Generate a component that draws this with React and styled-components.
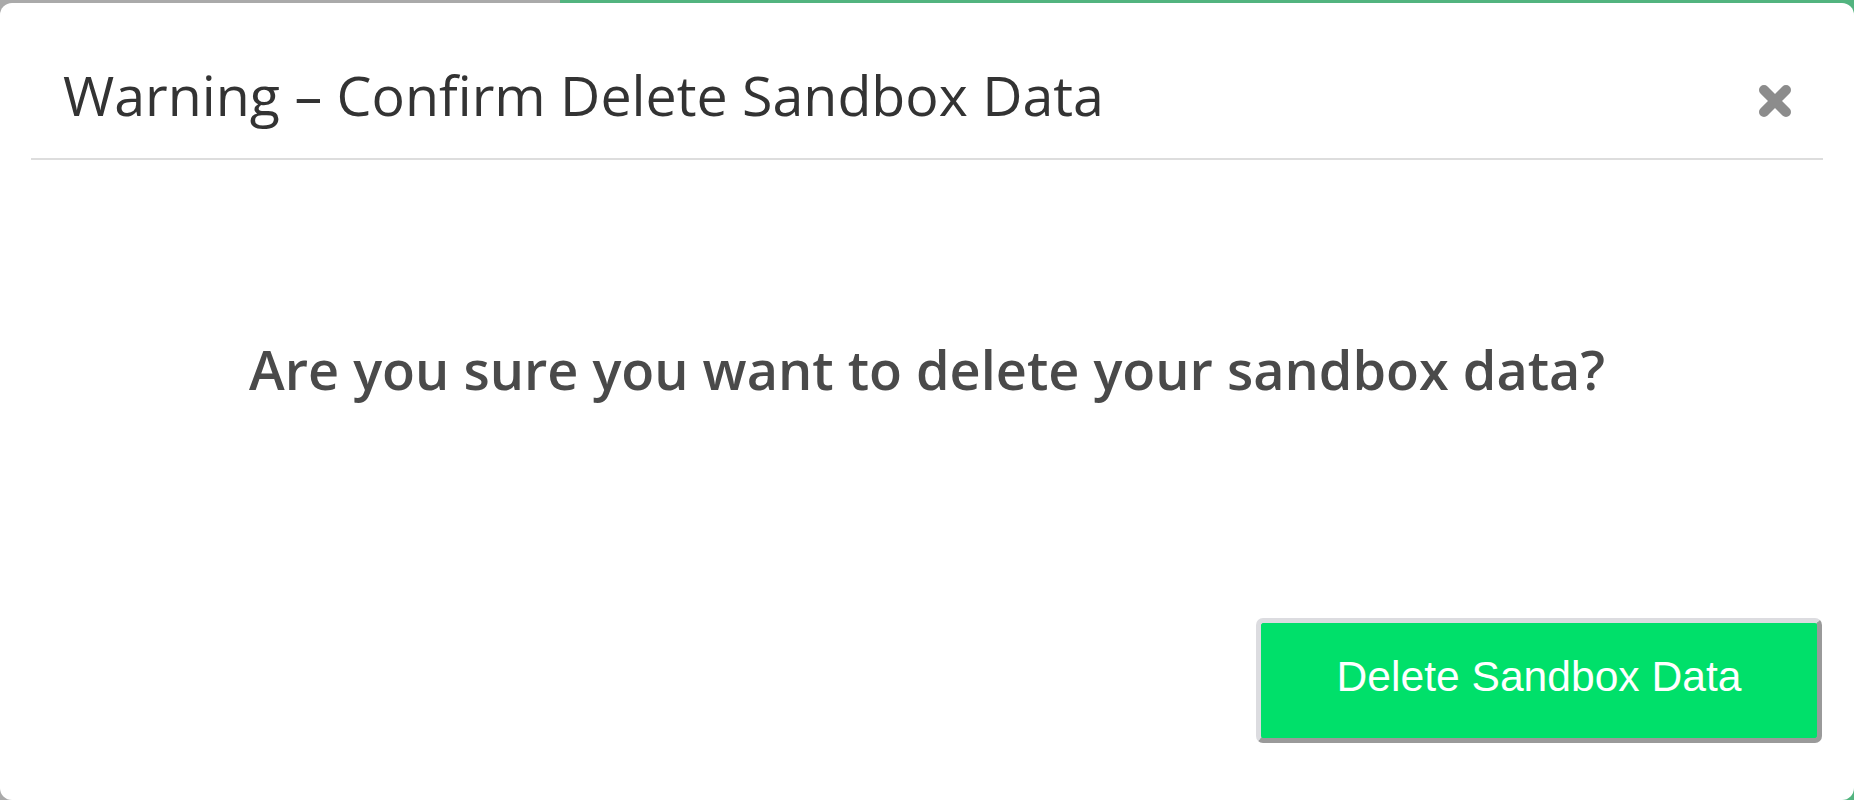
import React from "react";
import styled, { createGlobalStyle } from "styled-components";

const Global = createGlobalStyle`
  html, body {
    margin: 0;
    padding: 0;
    height: 100%;
    overflow: hidden;
  }
  body {
    background: linear-gradient(to right, #aaaaaa 0, #aaaaaa 560px, #52b47f 560px, #52b47f 100%);
    font-family: "Open Sans", "Noto Sans", sans-serif;
  }
`;

const Modal = styled.div`
  margin-top: 3px;
  height: 797px;
  background: #ffffff;
  border-radius: 12px;
  display: flex;
  flex-direction: column;
  box-sizing: border-box;
`;

const Header = styled.div`
  margin: 0 31px 0 31px;
  padding: 59px 32px 29px 32px;
  border-bottom: 2px solid #dddddd;
  display: flex;
  align-items: center;
  justify-content: space-between;
`;

const Title = styled.h4`
  margin: 0;
  font-family: "Open Sans", sans-serif;
  font-weight: 400;
  font-size: 55.5px;
  line-height: 1.2;
  color: #333333;
`;

const CloseButton = styled.button`
  border: 0;
  background: transparent;
  padding: 0;
  margin: 12px -3px 0 0;
  width: 38px;
  height: 36px;
  display: flex;
  align-items: center;
  justify-content: center;
  cursor: pointer;
`;

const Body = styled.div`
  flex: 1;
  display: flex;
  align-items: center;
  justify-content: center;
  padding-bottom: 40px;
`;

const Message = styled.p`
  margin: 0;
  font-family: "Open Sans", sans-serif;
  font-weight: 600;
  font-size: 54px;
  color: #4a4a4a;
  text-align: center;
`;

const Footer = styled.div`
  display: flex;
  justify-content: flex-end;
  margin: 0 32px 57px 32px;
`;

const DangerButton = styled.button`
  width: 566px;
  height: 125px;
  box-sizing: border-box;
  padding: 0 0 9px 0;
  background: #00e06a;
  border: 5px solid;
  border-color: #dcdce0 #9a9a9a #9a9a9a #dcdce0;
  border-radius: 7px;
  color: #ffffff;
  font-family: "Liberation Sans", Arial, sans-serif;
  font-size: 42.6px;
  font-weight: 400;
  cursor: pointer;
`;

function CloseIcon() {
  return (
    <svg width="38" height="36" viewBox="0 0 38 36" aria-hidden="true">
      <path
        d="M8 7 L30 29 M30 7 L8 29"
        stroke="#8c8c8c"
        strokeWidth="10"
        strokeLinecap="round"
        fill="none"
      />
    </svg>
  );
}

export default function App() {
  return (
    <>
      <Global />
      <Modal role="dialog">
        <Header>
          <Title>Warning – Confirm Delete Sandbox Data</Title>
          <CloseButton aria-label="Close">
            <CloseIcon />
          </CloseButton>
        </Header>
        <Body>
          <Message>Are you sure you want to delete your sandbox data?</Message>
        </Body>
        <Footer>
          <DangerButton>Delete Sandbox Data</DangerButton>
        </Footer>
      </Modal>
    </>
  );
}
